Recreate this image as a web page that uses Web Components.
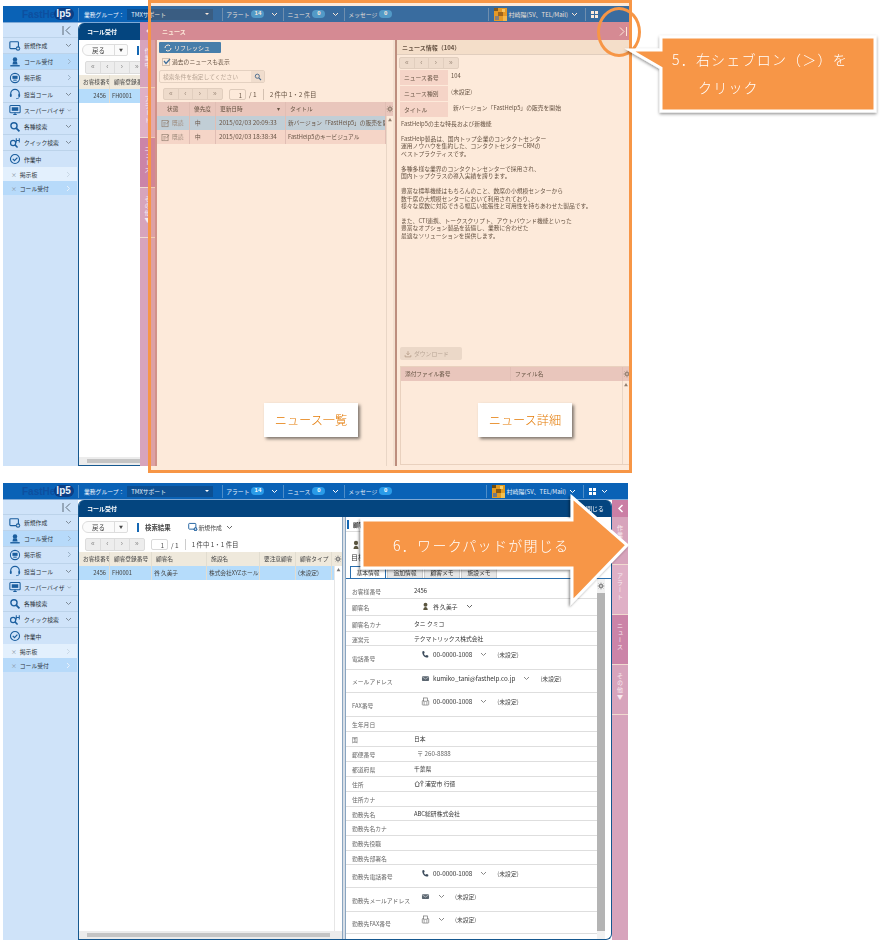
<!DOCTYPE html>
<html lang="ja">
<head>
<meta charset="utf-8">
<title>FastHelp5</title>
<style>
  html, body { margin: 0; background: #fff; }
  body {
    position: relative;
    width: 883px;
    height: 944px;
    overflow: hidden;
    font-family: "Noto Sans CJK JP", "Noto Sans", sans-serif;
  }
  .screens {
    display: flex;
    flex-direction: column;
    gap: 17px;
    padding: 6px 0 0 3px;
  }
</style>
</head>
<body>
<div class="screens">
  <fh-screen style="width:627px;height:460px;--fh-apps-chevron:hidden">
    <fh-call-panel pager="1 件中 1・1 件目" style="flex:1;min-width:0"></fh-call-panel>
    <fh-news-panel></fh-news-panel>
  </fh-screen>

  <fh-screen style="width:625px;height:457px">
    <fh-call-panel detail pager="1 件中 1・1 件目" style="flex:1;min-width:0"></fh-call-panel>
    <fh-tab-strip chevron style="width:16px"></fh-tab-strip>
  </fh-screen>
</div>

<note-frame></note-frame>
<note-callout>
  <div>5．右シェブロン（＞）を</div>
  <div style="padding-left:26px">クリック</div>
</note-callout>
<note-label style="left:264px;top:403px">ニュース一覧</note-label>
<note-label style="left:478px;top:403px">ニュース詳細</note-label>
<note-arrow>6．ワークパッドが閉じる</note-arrow>

<script>
const ICONS = {
  create: '<rect x="1" y="2" width="10" height="8" rx="1" fill="none" stroke="#1b5e9e" stroke-width="1.3"/><circle cx="10.5" cy="10" r="2.6" fill="#1b5e9e"/><path d="M9 10h3M10.5 8.5v3" stroke="#fff" stroke-width=".8"/>',
  person: '<circle cx="7" cy="4" r="2.6" fill="#1b5e9e"/><path d="M4.8 6.5h4.4l.8 3.5H4z" fill="#1b5e9e"/><rect x="1.5" y="10.6" width="11" height="1.6" fill="#1b5e9e"/>',
  board: '<circle cx="7" cy="7" r="5.4" fill="none" stroke="#1b5e9e" stroke-width="1.2"/><rect x="4" y="4.4" width="6" height="3.6" fill="#1b5e9e"/><path d="M5 9.5h4" stroke="#1b5e9e" stroke-width="1.2"/>',
  headset: '<path d="M2 8V6.6a5 5 0 0 1 10 0V8" fill="none" stroke="#1b5e9e" stroke-width="1.4"/><rect x="1" y="7" width="2.2" height="3.4" rx="1" fill="#1b5e9e"/><rect x="10.8" y="7" width="2.2" height="3.4" rx="1" fill="#1b5e9e"/><path d="M12 10c0 1.8-1.6 2.4-3.6 2.4" fill="none" stroke="#1b5e9e"/>',
  monitor: '<rect x="1" y="1.8" width="12" height="8.4" rx="1" fill="none" stroke="#1b5e9e" stroke-width="1.2"/><rect x="3.2" y="3.8" width="7.6" height="4.2" fill="#1b5e9e"/><path d="M5 12.2h4M7 10v2" stroke="#1b5e9e" stroke-width="1.2"/>',
  search: '<circle cx="5.8" cy="5.6" r="3.6" fill="none" stroke="#1b5e9e" stroke-width="1.6"/><path d="M8.4 8.4l3.8 3.8" stroke="#1b5e9e" stroke-width="2"/>',
  quick: '<circle cx="4.8" cy="7" r="3" fill="none" stroke="#1b5e9e" stroke-width="1.4"/><path d="M7 9.2l3 3" stroke="#1b5e9e" stroke-width="1.7"/><path d="M8.5 1.5v5M12 1.5v5M8.5 4h3.5" stroke="#1b5e9e" stroke-width="1.2"/>',
  check: '<circle cx="7" cy="7" r="5.3" fill="none" stroke="#1b5e9e" stroke-width="1.3"/><path d="M4.4 6.9l2 2 3.4-3.6" fill="none" stroke="#1b5e9e" stroke-width="1.4"/>',
  gear: '<circle cx="7" cy="7" r="2.6" fill="none" stroke="#777" stroke-width="2"/><path d="M7 1.2v2.4M7 10.4v2.4M1.2 7h2.4M10.4 7h2.4M2.9 2.9l1.7 1.7M9.4 9.4l1.7 1.7M11.1 2.9L9.4 4.6M4.6 9.4l-1.7 1.7" stroke="#777" stroke-width="1.5"/>',
  phone: '<path d="M3 1.5l2 .6.7 2.6-1.3 1c.6 1.5 1.6 2.6 3 3.4l1.2-1.2 2.5.8.4 2c-.8 1-2 1.3-3 1C5 10.8 2.6 8 2 4.5c-.1-1.2.2-2.3 1-3z" fill="#3b4a5a"/>',
  mail: '<rect x="1.5" y="3.5" width="11" height="7.4" rx="1.2" fill="#5b6670"/><path d="M2 4.5l5 3.3 5-3.3" fill="none" stroke="#fff" stroke-width=".8"/>',
  fax: '<rect x="2" y="5.5" width="10" height="7" rx="1" fill="none" stroke="#666" stroke-width="1"/><rect x="4" y="1.5" width="6" height="5" fill="#fff" stroke="#666" stroke-width="1"/><path d="M4 9h2M4 11h2M8 9h2M8 11h2" stroke="#666"/>',
  user: '<circle cx="7" cy="4.2" r="3" fill="#5b5640"/><path d="M3.500 12.5c.4-3.4 1.6-4.6 3.5-4.6s3.100 1.2 3.500 4.6z" fill="#5b5640"/>',
  home: '<path d="M1 6.5l3.5-3 3.5 3M2.2 6v4.5h4.6V6" fill="none" stroke="#555" stroke-width="1.1"/><circle cx="11" cy="4.5" r="1.7" fill="none" stroke="#555" stroke-width="1.1"/><path d="M11 6.5v4" stroke="#555" stroke-width="1.1"/>',
  status: '<rect x="1.5" y="2.5" width="9.5" height="9.5" fill="none" stroke="#777" stroke-width="1"/><path d="M3.5 5.5h4M3.5 7.5h4M3.5 9.5h3" stroke="#777" stroke-width=".8"/><path d="M8.5 8l4-5" stroke="#777" stroke-width="1.2"/>',
  download: '<path d="M7 2v6M4.500 5.8L7 8.4l2.500-2.600M2 9v3h10V9" fill="none" stroke="#9a8f88" stroke-width="1.2"/>'
};

const FONT = '"Noto Sans CJK JP", "Noto Sans", sans-serif';
const chevronDown = c => `<svg width="7" height="5" viewBox="0 0 7 5"><path d="M1 1l2.500 2.500L6 1" fill="none" stroke="${c}" stroke-width="1"/></svg>`;
const chevronRight = c => `<svg width="5" height="7" viewBox="0 0 5 7"><path d="M1 1l2.500 2.500L1 6" fill="none" stroke="${c}" stroke-width="1"/></svg>`;

class FhIcon extends HTMLElement {
  connectedCallback() {
    if (this.shadowRoot) return;
    const size = this.getAttribute('size') || 12;
    this.attachShadow({ mode: 'open' }).innerHTML = `
      <style>:host { display: inline-flex; flex: none; }</style>
      <svg width="${size}" height="${size}" viewBox="0 0 14 14">${ICONS[this.getAttribute('name')] || ''}</svg>
    `;
  }
}

class FhHeader extends HTMLElement {
  constructor() {
    super();
    const shadowRoot = this.attachShadow({ mode: 'open' });
    shadowRoot.innerHTML = `
      <style>
        :host {
          display: flex;
          align-items: center;
          height: 16px;
          background: #0a62b6;
          border-bottom: 1px solid #7fa9d6;
          color: #e8f1fa;
          font-size: 5.8px;
          white-space: nowrap;
        }
        .logo { width: 75px; box-sizing: border-box; padding-left: 19px; display: flex; align-items: center; font: bold 10px "Liberation Sans", sans-serif; color: #0d4f9f; flex: none; }
        .logo b { background: #0b3f86; color: #e8f1fa; border-radius: 7px; padding: 0 3px 0 2px; margin-left: -1px; line-height: 12px; }
        .sep { width: 1px; height: 13px; background: #4e8dc8; flex: none; }
        .group { margin-left: 5px; }
        .select { width: 86px; height: 11px; margin: 0 9px 0 3px; padding: 0 4px; box-sizing: border-box; background: #0c4f92; display: flex; align-items: center; justify-content: space-between; flex: none; }
        .select i { border: 2px solid transparent; border-top: 2.5px solid #fff; border-bottom: 0; }
        .item { display: flex; align-items: center; gap: 2px; padding: 0 5px 0 3px; }
        .item svg { margin-left: 5px; }
        .count { background: #2a9be8; color: #fff; border-radius: 5px; min-width: 13px; height: 7.5px; line-height: 7.5px; text-align: center; font: bold 6px "Liberation Sans", sans-serif; }
        .grow { flex: 1; }
        .avatar { margin: 0 2px 0 5px; }
        .user { display: flex; align-items: center; padding-right: 7px; font-size: 6px; }
        .user svg.c { margin-left: 3px; }
        .apps { display: flex; align-items: center; gap: 5px; padding: 0 20px 0 5px; }
        .apps svg:last-child { visibility: var(--fh-apps-chevron, visible); }
      </style>
      <div class="logo">FastHe<b>lp5</b></div>
      <div class="sep"></div>
      <div class="group">業務グループ：</div>
      <div class="select">TMXサポート<i></i></div>
      <div class="sep"></div>
      <div class="item">アラート<span class="count">14</span>${chevronDown('#fff')}</div>
      <div class="sep"></div>
      <div class="item">ニュース<span class="count">0</span>${chevronDown('#fff')}</div>
      <div class="sep"></div>
      <div class="item">メッセージ<span class="count">0</span></div>
      <div class="grow"></div>
      <div class="sep"></div>
      <div class="user">
        <svg class="avatar" width="13" height="13" viewBox="0 0 13 13">
          <rect width="13" height="13" fill="#e39a1f"/>
          <rect x="0" y="0" width="4" height="3" fill="#6b4a12"/>
          <rect x="8" y="1" width="3" height="3" fill="#f6cf6a"/>
          <rect x="4" y="4" width="5" height="4" fill="#8a5a14"/>
          <rect x="1" y="8" width="4" height="4" fill="#6f7a85"/>
          <rect x="9" y="8" width="4" height="5" fill="#f2c050"/>
        </svg>
        村崎陽(SV、TEL/Mail)<svg class="c" width="7" height="5" viewBox="0 0 7 5"><path d="M1 1l2.500 2.500L6 1" fill="none" stroke="#fff"/></svg>
      </div>
      <div class="sep"></div>
      <div class="apps">
        <svg width="7" height="7" viewBox="0 0 7 7" fill="#fff"><rect width="3" height="3"/><rect x="4" width="3" height="3"/><rect y="4" width="3" height="3"/><rect x="4" y="4" width="3" height="3"/></svg>
        ${chevronDown('#fff')}
      </div>
    `;
  }
}

class FhSidebar extends HTMLElement {
  constructor() {
    super();
    const menu = [
      ['create', '新規作成', 'd'],
      ['person', 'コール受付', 'r', true],
      ['board', '掲示板', 'r'],
      ['headset', '担当コール', 'd'],
      ['monitor', 'スーパーバイザ', 'd'],
      ['search', '各種検索', 'd'],
      ['quick', 'クイック検索', 'd']
    ];
    const rows = menu.map(([icon, label, arrow, on]) => `
      <div class="row ${on ? 'on' : ''}">
        <fh-icon name="${icon}" size="12"></fh-icon>
        <span>${label}</span>
        ${arrow === 'd' ? chevronDown('#7f8c99') : chevronRight('#9bb2c8')}
      </div>`).join('');

    this.attachShadow({ mode: 'open' }).innerHTML = `
      <style>
        :host {
          display: flex;
          flex-direction: column;
          background: #cfe3f9;
          font-size: 5.8px;
          color: #2d3640;
          white-space: nowrap;
          overflow: hidden;
        }
        .toggle { height: 15px; display: flex; align-items: center; justify-content: flex-end; padding-right: 7px; box-sizing: border-box; border-bottom: 1px solid #bcd3ea; flex: none; }
        .row { height: 16.2px; box-sizing: border-box; display: flex; align-items: center; gap: 3px; padding: 0 6px 0 6px; border-bottom: 1px solid #bcd3ea; flex: none; }
        .row span { flex: 1; }
        .row.on { background: #b7dafa; }
        .working { height: 16px; border: 0; }
        .tab { height: 14px; margin-right: 1px; padding: 0 6px 0 8px; display: flex; align-items: center; gap: 3px; flex: none; }
        .tab span { flex: 1; }
        .tab em { font-style: normal; color: #8b98a5; }
        .tab.a { background: #e3f0fd; }
        .tab.b { background: #b7dafa; }
      </style>
      <div class="toggle">
        <svg width="9" height="9" viewBox="0 0 9 9"><path d="M1 0v9M8 .5L4 4.500l4 4" fill="none" stroke="#5d6b78"/></svg>
      </div>
      ${rows}
      <div class="row working">
        <fh-icon name="check" size="12"></fh-icon>
        <span>作業中</span>
      </div>
      <div class="tab a"><em>×</em><span>掲示板</span>${chevronRight('#c9d8e6')}</div>
      <div class="tab b"><em>×</em><span>コール受付</span>${chevronRight('#e8f1fa')}</div>
    `;
  }
}

class FhScreen extends HTMLElement {
  constructor() {
    super();
    this.attachShadow({ mode: 'open' }).innerHTML = `
      <style>
        :host {
          display: grid;
          grid-template-columns: 75px 1fr;
          grid-template-rows: 17px 1fr;
          position: relative;
          overflow: hidden;
          font-family: ${FONT};
          filter: blur(.3px);
        }
        fh-header { grid-column: 1 / 3; }
        .work { display: flex; min-width: 0; min-height: 0; }
      </style>
      <fh-header></fh-header>
      <fh-sidebar></fh-sidebar>
      <div class="work"><slot></slot></div>
    `;
  }
}

class FhPager extends HTMLElement {
  connectedCallback() {
    if (this.shadowRoot) return;
    const compact = this.hasAttribute('compact');
    this.attachShadow({ mode: 'open' }).innerHTML = `
      <style>
        :host { display: flex; align-items: center; font-size: 5.8px; color: #444; white-space: nowrap; }
        .btns { display: flex; background: #ededed; border: 1px solid #dcdcdc; border-radius: 2px; color: #888; }
        .btns b { width: 14.5px; height: 10.5px; text-align: center; font: 6.5px/10px "Liberation Sans", sans-serif; border-right: 1px solid #dcdcdc; box-sizing: border-box; }
        .btns b:last-child { border: 0; }
        .num { margin-left: 6px; width: 17px; height: 11px; line-height: 11px; box-sizing: border-box; border: 1px solid #d9d9d9; background: #fff; text-align: right; padding-right: 3px; border-radius: 2px; }
        .of { margin-left: 3px; font-size: 6.5px; }
        .sep { width: 1px; height: 11px; background: #ccc; margin: 0 6px 0 6px; }
        .sum { font-size: 6.4px; }
      </style>
      <div class="btns"><b>«</b><b>‹</b><b>›</b><b>»</b></div>
      ${compact ? '' : `<div class="num">1</div><div class="of">/ 1</div><div class="sep"></div><div class="sum">${this.getAttribute('text') || ''}</div>`}
    `;
  }
}

class FhGrid extends HTMLElement {
  connectedCallback() {
    if (this.shadowRoot) return;
    const columns = JSON.parse(this.getAttribute('columns'));
    const rows = JSON.parse(this.getAttribute('rows'));
    const template = columns.map(c => c[1] + 'px').join(' ');
    const head = columns.map(c => `<div class="c">${c[0]}</div>`).join('');
    const body = rows.map(r => `
      <div class="line ${r.on ? 'on' : ''}">
        ${r.cells.map((v, i) => `<div class="c ${columns[i][2] || ''}">${v}</div>`).join('')}
      </div>`).join('');
    this.attachShadow({ mode: 'open' }).innerHTML = `
      <style>
        :host { display: flex; flex-direction: column; min-height: 0; font-size: 5.7px; color: #444; white-space: nowrap; }
        .head { display: flex; height: 14px; background: var(--fh-head, #efe9dc); flex: none; }
        .cols, .line { display: grid; grid-template-columns: ${template}; }
        .head .cols { flex: 1; }
        .head .c { line-height: 14px; padding-left: 4px; }
        .c { overflow: hidden; border-right: 1px solid var(--fh-rule, #e2ddd0); box-sizing: border-box; padding: 0 2px; }
        .gear { width: var(--fh-bar, 8px); flex: none; display: flex; align-items: center; justify-content: center; }
        .rest { display: flex; flex: 1; min-height: 0; }
        .list { flex: 1; min-width: 0; }
        .line { height: var(--fh-row-h, 13.5px); line-height: var(--fh-row-h, 13.5px); background: var(--fh-row, #fff); }
        .line.on { background: #b5dcfb; }
        .r { text-align: right; padding-right: 3px; }
        .p { padding-left: 5px; }
        .d { font-size: 6.2px; padding-left: 3px; }
        .s { display: flex; align-items: center; gap: 2px; color: #888; padding-left: 4px; }
        .track { width: var(--fh-bar, 8px); flex: none; border-left: 1px solid #e6e6e6; display: flex; justify-content: center; color: #777; font-size: 4px; line-height: 8px; box-sizing: border-box; }
      </style>
      <div class="head">
        <div class="cols">${head}</div>
        <div class="gear"><fh-icon name="gear" size="8"></fh-icon></div>
      </div>
      <div class="rest">
        <div class="list">${body}</div>
        <div class="track">▲</div>
      </div>
    `;
  }
}

class FhCallPanel extends HTMLElement {
  connectedCallback() {
    if (this.shadowRoot) return;
    const columns = [['お客様番号', 31, 'r'], ['顧客登録番号', 42], ['顧客名', 55], ['施設名', 53], ['要注意顧客', 36], ['顧客タイプ', 36]];
    const rows = [{ on: true, cells: ['2456', 'FH0001', '谷 久美子', '株式会社XYZホールディングス', '', '(未設定)'] }];
    const detail = this.hasAttribute('detail');
    this.attachShadow({ mode: 'open' }).innerHTML = `
      <style>
        :host {
          display: flex;
          flex-direction: column;
          min-height: 0;
          background: #fff;
          border: 1.5px solid #16588f;
          border-top: 0;
          border-radius: 6px 6px 6px 0;
          overflow: hidden;
          box-sizing: border-box;
          font-size: 5.8px;
          color: #444;
        }
        .title { height: 17px; background: #04457f; color: #fff; font-weight: bold; display: flex; align-items: center; justify-content: space-between; padding: 0 7px 0 8px; flex: none; font-size: 6px; }
        .title span + span { font-weight: normal; }
        .panes { flex: 1; display: flex; min-height: 0; }
        .list { width: 263px; display: flex; flex-direction: column; flex: none; min-height: 0; }
        .tools { height: 18px; display: flex; align-items: center; padding: 2px 0 0 3px; box-sizing: border-box; flex: none; }
        .back { display: flex; height: 11.5px; border: 1px solid #ddd; background: #fbfbfb; border-radius: 6px 2px 2px 6px; line-height: 10px; box-sizing: border-box; }
        .back span { padding: 0 9px; font-size: 6.5px; }
        .back i { font-style: normal; border-left: 1px solid #ddd; padding: 0 4px; font-size: 4px; line-height: 10px; }
        .bar { width: 2px; height: 9px; background: #1467b3; margin: 0 6px 0 9px; flex: none; }
        .result { font-size: 6.4px; font-weight: bold; }
        .new { display: flex; align-items: center; gap: 1px; margin-left: 17px; }
        .new svg { margin-left: 3px; }
        fh-pager { padding: 3px 0 1px 6px; height: 13px; flex: none; }
        fh-grid { flex: 1; }
        .hbar { height: 8px; background: #ececec; flex: none; display: flex; padding: 2px 12px 2px 8px; box-sizing: border-box; }
        .hbar i { flex: 1; background: #c4c4c4; }
        .split { width: 4px; background: #d8dfe7; border: solid #8aa5c0; border-width: 0 1px; box-sizing: border-box; flex: none; }
      </style>
      <div class="title"><span>コール受付</span><span>閉じる</span></div>
      <div class="panes">
        <div class="list">
          <div class="tools">
            <div class="back"><span>戻る</span><i>▼</i></div>
            <div class="bar"></div><div class="result">検索結果</div>
            <div class="new"><fh-icon name="create" size="10"></fh-icon>新規作成${chevronDown('#666')}</div>
          </div>
          <fh-pager text="${this.getAttribute('pager')}"></fh-pager>
          <fh-grid columns='${JSON.stringify(columns)}' rows='${JSON.stringify(rows)}'></fh-grid>
          <div class="hbar"><i></i></div>
        </div>
        ${detail ? '<div class="split"></div><fh-record style="flex:1;min-width:0"></fh-record>' : ''}
      </div>
    `;
  }
}

class FhRecord extends HTMLElement {
  connectedCallback() {
    if (this.shadowRoot) return;
    const unset = '<em>(未設定)</em>';
    const contact = (icon, value) => `<div class="contact"><fh-icon name="${icon}" size="9"></fh-icon>${value ? `<span class="v">${value}</span>` : ''}${chevronDown('#888')}${unset}</div>`;
    const fields = [
      ['お客様番号', 20, '2456'],
      ['顧客名', 17, `<div class="contact name"><fh-icon name="user" size="9"></fh-icon><span>谷 久美子</span>${chevronDown('#666')}</div>`],
      ['顧客名カナ', 16, 'タニ クミコ'],
      ['運営元', 14, 'テクマトリックス株式会社'],
      ['電話番号', 24, contact('phone', '00-0000-1008')],
      ['メールアドレス', 23, contact('mail', 'kumiko_tani@fasthelp.co.jp')],
      ['FAX番号', 24, contact('fax', '00-0000-1008')],
      ['生年月日', 15, ''],
      ['国', 15, '日本'],
      ['郵便番号', 15, '<span class="zip">〒 260-8888</span>'],
      ['都道府県', 15, '千葉県'],
      ['住所', 15, '<div class="contact addr"><fh-icon name="home" size="10"></fh-icon><span>浦安市 行徳</span></div>'],
      ['住所カナ', 15, ''],
      ['勤務先名', 14, 'ABC総研株式会社'],
      ['勤務先名カナ', 15, ''],
      ['勤務先役職', 15, ''],
      ['勤務先部署名', 14, ''],
      ['勤務先電話番号', 23, contact('phone', '00-0000-1008')],
      ['勤務先メールアドレス', 24, contact('mail', '')],
      ['勤務先FAX番号', 22, contact('fax', '')]
    ];
    const rows = fields.map(([label, h, value], i) => `
      <div class="row" style="height:${h}px${i === 0 ? ';padding-top:5px' : ''}">
        <div class="k">${label}</div><div class="val">${value}</div>
      </div>`).join('');
    this.attachShadow({ mode: 'open' }).innerHTML = `
      <style>
        :host { display: flex; flex-direction: column; min-height: 0; font-size: 5.8px; color: #333; white-space: nowrap; position: relative; }
        .title { height: 15px; display: flex; align-items: center; gap: 4px; padding-left: 1px; border-bottom: 1px solid #ddd; font-weight: bold; box-sizing: border-box; flex: none; }
        .title i { width: 2px; height: 9px; background: #1467b3; }
        .who { height: 34px; padding: 6px 0 0 5px; box-sizing: border-box; flex: none; line-height: 13px; font-size: 7px; }
        .who div { display: flex; align-items: center; gap: 3px; }
        .tabs { display: flex; height: 12px; gap: 1px; padding-left: 4px; border-bottom: 1.5px solid #2a6ead; box-sizing: content-box; flex: none; }
        .tabs span { width: 36px; background: #e6e6e6; border: 1px solid #ccc; border-bottom: 0; text-align: center; line-height: 11px; box-sizing: border-box; }
        .tabs span.on { background: #fff; border-color: #2a6ead; }
        .form { flex: 1; display: flex; min-height: 0; position: relative; }
        .rows { flex: 1; min-width: 0; }
        .row { display: flex; align-items: center; padding-left: 6px; border-bottom: 1.5px solid #dedede; box-sizing: border-box; }
        .k { width: 62px; color: #666; flex: none; padding-top: 1px; }
        .val { flex: 1; padding-bottom: 1px; }
        .contact { display: flex; align-items: center; gap: 3px; padding: 0 0 5px 7px; }
        .contact svg { margin: 0 7px 0 5px; }
        .contact em { font-style: normal; color: #444; }
        .name { padding: 0 0 0 7px; }
        .addr { padding: 0; gap: 1px; }
        .zip { color: #666; padding-left: 3px; font-size: 6.2px; }
        .bar { width: 8px; flex: none; margin-right: 6px; background: #f1f1f1; display: flex; flex-direction: column; }
        .gear { height: 14px; display: flex; justify-content: center; align-items: center; }
        .thumb { flex: 1; background: #b4b4b4; margin: 0 0 8px; }
        .v { font-size: 6.3px; }
      </style>
      <div class="title"><i></i>顧客情報</div>
      <div class="who">
        <div><fh-icon name="user" size="10"></fh-icon>谷 久美子</div>
        <div>目標</div>
      </div>
      <div class="tabs"><span class="on">基本情報</span><span>追加情報</span><span>顧客メモ</span><span>施設メモ</span></div>
      <div class="form">
        <div class="rows">${rows}</div>
        <div class="bar"><div class="gear"><fh-icon name="gear" size="8"></fh-icon></div><div class="thumb"></div></div>
      </div>
    `;
  }
}

class FhTabStrip extends HTMLElement {
  connectedCallback() {
    if (this.shadowRoot) return;
    this.attachShadow({ mode: 'open' }).innerHTML = `
      <style>
        :host { display: flex; flex-direction: column; background: #d7a4bc; color: #f7ecf1; font-size: 6px; flex: none; }
        .chev { height: 17px; background: #cb7fa5; display: flex; align-items: center; justify-content: center; flex: none; }
        .t { height: 50px; box-sizing: border-box; writing-mode: vertical-rl; display: flex; align-items: center; padding-top: 8px; border-bottom: 1px solid #f0dbd0; flex: none; letter-spacing: 1px; width: 100%; }
        .a { height: 48px; background: #d7a4bc; }
        .b { background: #dfb0c6; }
        .c { background: #cb84a8; }
        .d { background: #d7a4bc; }
      </style>
      ${this.hasAttribute('chevron') ? `<div class="chev"><svg width="7" height="9" viewBox="0 0 7 9"><path d="M5.5 1L2 4.5 5.5 8" fill="none" stroke="#fff" stroke-width="1.5"/></svg></div>` : ''}
      <div class="t a">作業中</div>
      <div class="t b">アラート</div>
      <div class="t c">ニュース</div>
      <div class="t d">その他▼</div>
    `;
  }
}

// パネルはコール受付の上に重なる
class FhNewsPanel extends HTMLElement {
  constructor() {
    super();
    const body = [
      'FastHelp5の主な特長および新機能', '',
      'FastHelp製品は、国内トップ企業のコンタクトセンター',
      '運用ノウハウを集約した、コンタクトセンターCRMの',
      'ベストプラクティスです。', '',
      '多種多様な業界のコンタクトンセンターで採用され、',
      '国内トップクラスの導入実績を誇ります。', '',
      '豊富な標準機能はもちろんのこと、数席の小規模センターから',
      '数千席の大規模センターにおいて利用されており、',
      '様々な席数に対応できる幅広い拡張性と可用性を持ちあわせた製品です。', '',
      'また、CTI連携、トークスクリプト、アウトバウンド機能といった',
      '豊富なオプション製品を装備し、業務に合わせた',
      '最適なソリューションを提供します。'
    ].map(line => `<div>${line || '&nbsp;'}</div>`).join('');
    const status = '<fh-icon name="status" size="9"></fh-icon>既読';
    const columns = [
      ['<span style="padding-left:6px">状態</span>', 33, 's'],
      ['優先度', 26, 'p'],
      ['更新日時 <span style="margin-left:33px">▾</span>', 70, 'd'],
      ['タイトル', 100]
    ];
    const rows = [
      { on: true, cells: [status, '中', '2015/02/03 20:09:33', '新バージョン「FastHelp5」の販売を開始'] },
      { cells: [status, '中', '2015/02/03 18:38:34', 'FastHelp5のキービジュアル'] }
    ];
    const attr = v => JSON.stringify(v).replace(/'/g, '&#39;');

    this.attachShadow({ mode: 'open' }).innerHTML = `
      <style>
        :host {
          position: absolute;
          left: 137px;
          top: 16px;
          right: 0;
          bottom: 0;
          display: flex;
          flex-direction: column;
          background: #fff;
          font-size: 5.8px;
          color: #444;
          white-space: nowrap;
          --fh-head: #e6d3da;
          --fh-rule: #ddc9d0;
          --fh-row: #f5e5e8;
        }
        .title { height: 18px; display: flex; align-items: center; background: #cd87a7; color: #fff; flex: none; font-weight: bold; font-size: 6px; }
        .title .c { width: 15px; display: flex; justify-content: center; }
        .title .n { flex: 1; padding-left: 7px; }
        .title .x { padding-right: 2px; display: flex; }
        .panes { flex: 1; display: flex; min-height: 0; }
        fh-tab-strip { width: 15px; border-right: 2px solid #c9929c; box-sizing: content-box; }
        .left { width: 236px; display: flex; flex-direction: column; padding-top: 2px; box-sizing: border-box; flex: none; }
        .refresh { margin-left: 2px; width: 62px; height: 11px; background: #1c78c4; border-radius: 1px; color: #fff; display: flex; align-items: center; gap: 2px; padding-left: 5px; box-sizing: border-box; font-size: 6px; flex: none; }
        .refresh svg { flex: none; }
        .past { margin: 4px 0 4px 5px; display: flex; align-items: center; gap: 2px; height: 9px; flex: none; }
        .past i { width: 6px; height: 6px; border: 1px solid #ccc; background: #fff; position: relative; }
        .past svg { position: absolute; left: 0; top: -1px; }
        .search { margin-left: 2px; width: 106px; height: 13px; border: 1px solid #e0e0e0; border-radius: 2px; display: flex; align-items: center; background: #fff; box-sizing: border-box; flex: none; color: #aaa; padding-left: 3px; justify-content: space-between; }
        .search b { width: 13px; height: 11px; background: #efefef; display: flex; align-items: center; justify-content: center; }
        fh-pager { margin: 5px 0 2px 6px; height: 12px; flex: none; }
        fh-grid { flex: 1; --fh-bar: 7px; --fh-row-h: 14px; }
        .split { width: 4px; background: #f3f3f3; border-right: 2px solid #b08c8c; box-sizing: border-box; flex: none; }
        .right { flex: 1; min-width: 0; display: flex; flex-direction: column; }
        .rhead { height: 15px; background: #f4f0ea; font-weight: bold; line-height: 15px; padding-left: 5px; border-bottom: 1px solid #ddd; box-sizing: border-box; flex: none; font-size: 6px; }
        .rpager { margin: 2px 0 1px 2px; flex: none; }
        .kv { display: flex; height: 16px; margin-left: 3px; flex: none; }
        .kv b { width: 48px; font-weight: normal; background: #f5e4e8; padding-left: 4px; box-sizing: border-box; line-height: 15px; margin-bottom: 1px; }
        .kv span { padding-left: 3px; line-height: 12px; }
        .kv.t span { padding-left: 5px; }
        .text { padding: 2px 0 0 4px; line-height: 7.45px; height: 229px; font-size: 5.8px; box-sizing: border-box; flex: none; }
        .dl { margin-left: 3px; width: 62px; height: 13px; background: #e9e9e9; border-radius: 2px; color: #aaa; display: flex; align-items: center; gap: 2px; padding-left: 4px; box-sizing: border-box; flex: none; }
        fh-grid.files { margin: 6px 0 1px 3px; flex: 1; border: 1px solid #e6e0dc; --fh-row: #fff; }
      </style>
      <div class="title">
        <div class="c"><svg width="6" height="8" viewBox="0 0 6 8"><path d="M5 1L2 4l3 3" fill="none" stroke="#f3dfe7" stroke-width="1.2"/></svg></div>
        <div class="n">ニュース</div>
        <div class="x"><svg width="9" height="9" viewBox="0 0 9 9"><path d="M1 .5l4 4-4 4M7.5 0v9" fill="none" stroke="#fff" stroke-width="1"/></svg></div>
      </div>
      <div class="panes">
        <fh-tab-strip></fh-tab-strip>
        <div class="left">
          <div class="refresh">
            <svg width="8" height="8" viewBox="0 0 8 8"><path d="M1 4a3 3 0 0 1 5-2.2M7 4a3 3 0 0 1-5 2.2" fill="none" stroke="#fff"/></svg>
            リフレッシュ
          </div>
          <div class="past">
            <i><svg width="8" height="7" viewBox="0 0 8 7"><path d="M1 3l2 2.4L7 1" fill="none" stroke="#1467b3" stroke-width="1.3"/></svg></i>
            過去のニュースも表示
          </div>
          <div class="search">検索条件を指定してください<b><fh-icon name="search" size="8"></fh-icon></b></div>
          <fh-pager text="2 件中 1・2 件目"></fh-pager>
          <fh-grid columns='${attr(columns)}' rows='${attr(rows)}'></fh-grid>
        </div>
        <div class="split"></div>
        <div class="right">
          <div class="rhead">ニュース情報（104）</div>
          <fh-pager class="rpager" compact></fh-pager>
          <div class="kv"><b>ニュース番号</b><span>104</span></div>
          <div class="kv"><b>ニュース種別</b><span>(未設定)</span></div>
          <div class="kv t"><b>タイトル</b><span>新バージョン「FastHelp5」の販売を開始</span></div>
          <div class="text">${body}</div>
          <div class="dl"><fh-icon name="download" size="8"></fh-icon>ダウンロード</div>
          <fh-grid class="files" columns='${attr([['添付ファイル番号', 110], ['ファイル名', 112]])}' rows='[]'></fh-grid>
        </div>
      </div>
    `;
  }
}

class NoteFrame extends HTMLElement {
  constructor() {
    super();
    this.attachShadow({ mode: 'open' }).innerHTML = `
      <style>
        :host {
          position: absolute;
          left: 148px;
          top: 0;
          width: 484px;
          height: 473px;
          box-sizing: border-box;
          border: 3px solid #f79646;
          background: rgba(247, 150, 70, .2);
        }
        .ring {
          position: absolute;
          left: 446px;
          top: 4px;
          width: 44px;
          height: 50px;
          box-sizing: border-box;
          border: 3px solid #f79646;
          border-radius: 50%;
        }
      </style>
      <div class="ring"></div>
    `;
  }
}

class NoteCallout extends HTMLElement {
  constructor() {
    super();
    this.attachShadow({ mode: 'open' }).innerHTML = `
      <style>
        :host { position: absolute; left: 620px; top: 30px; width: 262px; height: 90px; color: #fff; font-size: 14px; letter-spacing: 1.2px; line-height: 28px; }
        svg { position: absolute; inset: 0; }
        .text { position: absolute; left: 52px; top: 15px; white-space: nowrap; font-weight: 300; }
      </style>
      <svg width="262" height="90" viewBox="620 30 262 90">
        <defs><filter id="sh" x="-10%" y="-10%" width="120%" height="130%"><feDropShadow dx="0" dy="1.5" stdDeviation="1.5" flood-color="#000" flood-opacity=".45"/></filter></defs>
        <path d="M661 37H875V111H661V68L630 50H661Z" fill="#f79646" stroke="#fff" stroke-width="3" filter="url(#sh)"/>
      </svg>
      <div class="text"><slot></slot></div>
    `;
  }
}

class NoteLabel extends HTMLElement {
  constructor() {
    super();
    this.attachShadow({ mode: 'open' }).innerHTML = `
      <style>
        :host {
          position: absolute;
          width: 94px;
          height: 34px;
          background: #fff;
          color: #e47a05;
          font-size: 12.2px;
          font-weight: 300;
          display: flex;
          align-items: center;
          justify-content: center;
          box-shadow: 2px 2px 3px rgba(0, 0, 0, .5);
          white-space: nowrap;
        }
      </style>
      <slot></slot>
    `;
  }
}

class NoteArrow extends HTMLElement {
  constructor() {
    super();
    this.attachShadow({ mode: 'open' }).innerHTML = `
      <style>
        :host { position: absolute; left: 355px; top: 490px; width: 280px; height: 120px; color: #fff; font-size: 14px; letter-spacing: 1.3px; }
        svg { position: absolute; inset: 0; }
        .text { position: absolute; left: 38px; top: 43px; line-height: 24px; white-space: nowrap; font-weight: 300; }
      </style>
      <svg width="280" height="120" viewBox="355 490 280 120">
        <defs><filter id="sh" x="-10%" y="-10%" width="120%" height="130%"><feDropShadow dx="-1.5" dy="1.5" stdDeviation="1.2" flood-color="#000" flood-opacity=".45"/></filter></defs>
        <path d="M362 520H572V497L627 545 572 602V568H362Z" fill="#f79646" stroke="#fff" stroke-width="3" filter="url(#sh)"/>
      </svg>
      <div class="text"><slot></slot></div>
    `;
  }
}

customElements.define('fh-icon', FhIcon);
customElements.define('fh-header', FhHeader);
customElements.define('fh-sidebar', FhSidebar);
customElements.define('fh-screen', FhScreen);
customElements.define('fh-pager', FhPager);
customElements.define('fh-grid', FhGrid);
customElements.define('fh-call-panel', FhCallPanel);
customElements.define('fh-record', FhRecord);
customElements.define('fh-tab-strip', FhTabStrip);
customElements.define('fh-news-panel', FhNewsPanel);
customElements.define('note-frame', NoteFrame);
customElements.define('note-callout', NoteCallout);
customElements.define('note-label', NoteLabel);
customElements.define('note-arrow', NoteArrow);
</script>
</body>
</html>
